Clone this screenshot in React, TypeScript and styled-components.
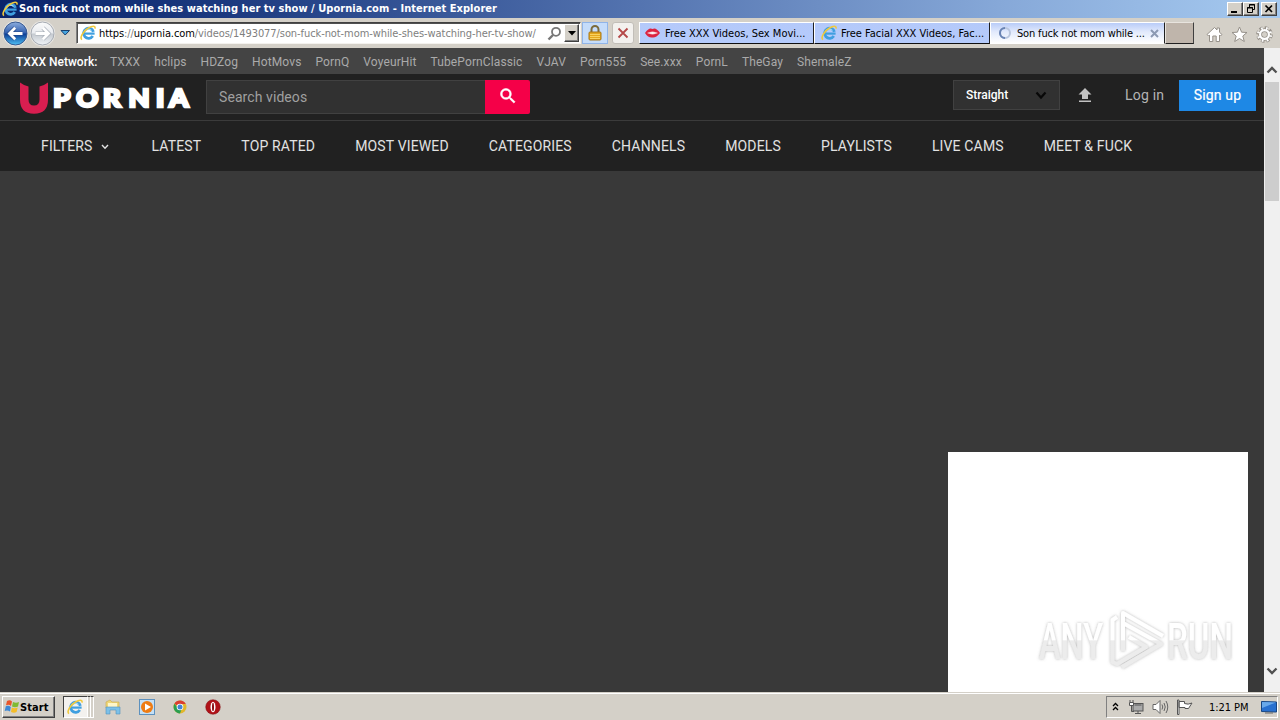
import React from "react";
import styled, { createGlobalStyle } from "styled-components";

const GlobalStyle = createGlobalStyle`
  * { box-sizing: border-box; }
  html, body { margin: 0; padding: 0; overflow: hidden; }
`;

const uiFont = `"DejaVu Sans Condensed", "DejaVu Sans", sans-serif`;

const Desktop = styled.div`
  width: 1280px;
  height: 720px;
  display: flex;
  flex-direction: column;
  overflow: hidden;
  background: #d4d0c8;
  font-family: ${uiFont};
  font-size: 11px;
  color: #000;
  white-space: nowrap;
`;

const TitleBar = styled.header`
  height: 18px;
  flex: none;
  display: flex;
  align-items: center;
  padding: 0 3px 0 2px;
  background: linear-gradient(90deg, #0a246a 0%, #1c3a80 18%, #5474b0 50%, #86a8d8 78%, #a6caf0 100%);
`;

const Title = styled.div`
  flex: 1;
  margin-left: 1px;
  color: #fff;
  font-weight: 700;
  font-size: 11px;
  letter-spacing: 0.04px;
  line-height: 18px;
`;

const WindowButtons = styled.div`
  display: flex;
`;

const WindowButton = styled.button<{ $gap?: number }>`
  width: 16px;
  height: 14px;
  padding: 0;
  margin-left: ${(p) => p.$gap ?? 0}px;
  border: 1px solid;
  border-color: #fff #404040 #404040 #fff;
  box-shadow: inset -1px -1px #808080;
  background: #d4d0c8;
  display: flex;
  align-items: center;
  justify-content: center;
`;

const Toolbar = styled.div`
  height: 30px;
  flex: none;
  display: flex;
  align-items: center;
  padding-left: 2px;
  background: #d4d0c8;
`;

const AddressBar = styled.div`
  width: 505px;
  height: 22px;
  margin-left: 5px;
  display: flex;
  align-items: center;
  padding: 1px 1px 1px 3px;
  border: 1px solid;
  border-color: #404040 #f4f2ee #f4f2ee #808080;
  box-shadow: inset 1px 1px #505050;
  background: #fff;
`;

const Address = styled.div`
  flex: 1;
  margin-left: 3px;
  color: #808080;
  letter-spacing: -0.08px;
  b { font-weight: 400; color: #000; }
`;

const DropButton = styled.button`
  width: 15px;
  height: 18px;
  margin-left: 2px;
  padding: 0;
  border: 1px solid;
  border-color: #fff #404040 #404040 #fff;
  box-shadow: inset -1px -1px #808080;
  background: #d4d0c8;
  display: flex;
  align-items: center;
  justify-content: center;
`;

const ToolButton = styled.button<{ $width: number; $active?: boolean; $gap: number }>`
  width: ${(p) => p.$width}px;
  height: 22px;
  margin-left: ${(p) => p.$gap}px;
  padding: 0;
  display: flex;
  align-items: center;
  justify-content: center;
  border: 1px solid ${(p) => (p.$active ? "#90b4e8" : "#c2beb8")};
  border-radius: ${(p) => (p.$active ? 0 : 3)}px;
  background: ${(p) => (p.$active ? "#c5dcfa" : "#f3f1ee")};
`;

const Tabs = styled.div`
  display: flex;
  margin-left: 5px;
`;

const Tab = styled.div<{ $width: number; $active?: boolean; $pad: number }>`
  width: ${(p) => p.$width}px;
  height: 22px;
  display: flex;
  align-items: center;
  padding-left: ${(p) => p.$pad}px;
  border: 1px solid;
  border-color: #fff #202020 #101010 #fff;
  background: ${(p) =>
    p.$active ? "linear-gradient(#b9ccf8, #e2eafc 45%, #ffffff)" : "linear-gradient(#b4c9fa, #b5cbfc)"};
  ${(p) => p.$active && "border-bottom-color: #fff;"}
`;

const TabLabel = styled.span<{ $gap: number; $spacing: number }>`
  margin-left: ${(p) => p.$gap}px;
  letter-spacing: ${(p) => p.$spacing}px;
`;

const NewTab = styled.div`
  width: 29px;
  height: 22px;
  border: 1px solid;
  border-color: #e8e4de #404040 #202020 #e8e4de;
  background: #bfb5ab;
`;

const ToolIcons = styled.div`
  display: flex;
  gap: 8px;
  margin-left: 12px;
  padding-top: 3px;
`;

const Viewport = styled.main`
  height: 644px;
  flex: none;
  display: flex;
`;

const Page = styled.div`
  width: 1264px;
  display: flex;
  flex-direction: column;
  background: #393939;
  font-family: Roboto, sans-serif;
`;

const Network = styled.nav`
  height: 26px;
  flex: none;
  display: flex;
  align-items: center;
  padding: 2px 0 0 16px;
  background: #444;
  color: #aaa;
  font-size: 12px;
`;

const NetworkLabel = styled.span`
  width: 94px;
  color: #fff;
  font-weight: 500;
`;

const NetworkLink = styled.a`
  margin-right: 14px;
  letter-spacing: 0.115px;
`;

const SiteHeader = styled.header`
  height: 47px;
  flex: none;
  display: flex;
  align-items: flex-start;
  padding: 6px 8px 0 20px;
  background: #212121;
  border-bottom: 1px solid #3b3b3b;
`;

const Brand = styled.div`
  width: 186px;
  display: flex;
  align-items: flex-start;
  padding-top: 2px;
`;

const SearchField = styled.div`
  width: 279px;
  height: 34px;
  padding-left: 12px;
  border: 1px solid #414141;
  border-right: 0;
  background: #313131;
  color: #a0a0a0;
  font-size: 14px;
  letter-spacing: 0.08px;
  line-height: 32px;
`;

const SearchButton = styled.button`
  width: 45px;
  height: 34px;
  padding: 0 0 3px;
  border: 0;
  border-radius: 0 2px 2px 0;
  background: #f50048;
  display: flex;
  align-items: center;
  justify-content: center;
`;

const Account = styled.div`
  flex: 1;
  display: flex;
  align-items: flex-start;
  justify-content: flex-end;
`;

const Orientation = styled.div`
  width: 107px;
  height: 30px;
  display: flex;
  align-items: center;
  justify-content: space-between;
  padding: 0 12px;
  border: 1px solid #414141;
  background: #313131;
  color: #fff;
  font-size: 12px;
  font-weight: 500;
`;

const Upload = styled.div`
  width: 65px;
  height: 30px;
  padding: 7px 0 0 18px;
`;

const LogIn = styled.a`
  width: 54px;
  color: #b4b4b4;
  font-size: 14px;
  line-height: 30px;
  letter-spacing: 0.2px;
`;

const SignUp = styled.a`
  width: 77px;
  height: 31px;
  background: #1e88e5;
  color: #fff;
  font-size: 14px;
  font-weight: 400;
  letter-spacing: 0.15px;
  -webkit-text-stroke: 0.2px #fff;
  line-height: 31px;
  text-align: center;
`;

const Menu = styled.nav`
  height: 50px;
  flex: none;
  display: flex;
  align-items: center;
  gap: 40px;
  padding-left: 41px;
  background: #212121;
  color: #e2e2e2;
  font-size: 14px;
  letter-spacing: 0.15px;
`;

const MenuItem = styled.a`
  display: flex;
  align-items: center;
`;

const Content = styled.section`
  flex: 1;
  display: flex;
  align-items: flex-end;
  justify-content: flex-end;
  padding-right: 16px;
`;

const Advert = styled.div`
  width: 300px;
  height: 240px;
  display: flex;
  align-items: flex-start;
  justify-content: flex-end;
  padding: 152px 8px 0 0;
  background: #fff;
`;

const ScrollBar = styled.div`
  width: 16px;
  display: flex;
  flex-direction: column;
  align-items: center;
  background: #f0f0f0;
`;

const ScrollArrow = styled.div<{ $height: number; $lift: number }>`
  height: ${(p) => p.$height}px;
  display: flex;
  align-items: flex-end;
  padding-bottom: ${(p) => p.$lift}px;
`;

const ScrollThumb = styled.div`
  width: 14px;
  height: 119px;
  background: #cdcdcd;
`;

const ScrollTrack = styled.div`
  flex: 1;
`;

const Taskbar = styled.footer`
  height: 28px;
  flex: none;
  display: flex;
  align-items: flex-start;
  padding: 3px 2px 0 2px;
  border-top: 1px solid #d4d0c8;
  box-shadow: inset 0 1px #fff;
  background: #d4d0c8;
`;

const StartButton = styled.button`
  width: 53px;
  height: 22px;
  padding: 0 0 0 1px;
  display: flex;
  align-items: center;
  border: 1px solid;
  border-color: #fff #404040 #404040 #fff;
  box-shadow: inset -1px -1px #808080;
  background: #d4d0c8;
  font: 700 11px ${uiFont};
  letter-spacing: 0.1px;
`;

const ActiveTask = styled.div`
  width: 25px;
  height: 22px;
  margin-left: 8px;
  padding-left: 3px;
  display: flex;
  align-items: center;
  border: 1px solid;
  border-color: #404040 #fff #fff #404040;
  background: #f3f1ee;
`;

const StackEdge = styled.div`
  width: 3px;
  height: 22px;
  border: 1px solid #fff;
  border-left: 0;
  border-top-color: #404040;
`;

const QuickLaunch = styled.div`
  display: flex;
  gap: 18px;
  margin-left: 11px;
  padding-top: 3px;
`;

const Tray = styled.div`
  width: 172px;
  height: 22px;
  margin-left: auto;
  display: flex;
  align-items: center;
  padding-left: 5px;
  border: 1px solid;
  border-color: #808080 #fff #fff #808080;
`;

const Clock = styled.span`
  width: 41px;
  margin: 0 11px 0 16px;
  letter-spacing: -0.05px;
`;

function IELogo({ size = 16 }: { size?: number }) {
  return (
    <svg width={size} height={size} viewBox="0 0 16 16" fill="none">
      <path d="M13.4 6.9A5 5 0 1 0 12.8 11" stroke="#3f9fe0" strokeWidth="2.8" />
      <path d="M4 8.6H14.6" stroke="#3f9fe0" strokeWidth="2.2" />
      <path d="M4.6 6.5A4.2 4.2 0 0 1 11.5 5.5" stroke="#a5dcfa" strokeWidth="1.1" />
      <path d="M2 14.6C-.6 13 3 6 8.5 3C12 .8 15.5.2 15 3.6" stroke="#f0c93c" strokeWidth="1.6" />
    </svg>
  );
}

function NavCircle({ forward }: { forward?: boolean }) {
  const id = forward ? "fwd" : "back";
  return (
    <svg width="27" height="27" viewBox="0 0 27 27">
      <defs>
        <linearGradient id={id} x1="0" y1="0" x2="0" y2="1">
          <stop offset="0" stopColor={forward ? "#fbfbfb" : "#8eaede"} />
          <stop offset=".48" stopColor={forward ? "#e8ebef" : "#315fae"} />
          <stop offset=".52" stopColor={forward ? "#c4c9cf" : "#0b3d95"} />
          <stop offset="1" stopColor={forward ? "#f0f4f8" : "#4fc1f5"} />
        </linearGradient>
      </defs>
      <circle cx="13.5" cy="13.5" r="12.7" fill="#e8e6e2" />
      <circle cx="13.5" cy="13.5" r="11.5" fill={`url(#${id})`} stroke={forward ? "#a5aab2" : "#37588f"} />
      <g transform={forward ? "translate(27 0) scale(-1 1)" : undefined}>
        <path
          d="M20.5 13.5H8M13 8L7.5 13.5L13 19"
          fill="none"
          stroke={forward ? "#a6adb6" : "#24488a"}
          strokeWidth="4.2"
        />
        <path d="M20.5 13.5H8M13.2 7.8L7.5 13.5L13.2 19.2" fill="none" stroke="#fff" strokeWidth="2.8" />
      </g>
    </svg>
  );
}

function Watermark() {
  return (
    <svg width="204" height="76" viewBox="0 0 204 76" fill="none" overflow="visible">
      <defs>
        <linearGradient id="mark" x1="0" y1="0" x2="0" y2="66" gradientUnits="userSpaceOnUse">
          <stop offset=".54" stopColor="#fff" />
          <stop offset=".56" stopColor="#ececec" />
        </linearGradient>
        <filter id="halo" x="-10%" y="-10%" width="120%" height="120%">
          <feDropShadow dx="0" dy="0" stdDeviation="1.6" floodColor="#777" floodOpacity=".55" />
        </filter>
      </defs>
      <g filter="url(#halo)" fill="url(#mark)">
        <text x="3" y="55" fontFamily="Roboto" fontSize="50" fontWeight="500" textLength="64" lengthAdjust="spacingAndGlyphs">ANY</text>
        <text x="131" y="55" fontFamily="Roboto" fontSize="50" fontWeight="500" textLength="66" lengthAdjust="spacingAndGlyphs">RUN</text>
        <g stroke="url(#mark)" strokeWidth="4" strokeLinejoin="round" fill="none">
          <path d="M81 13L76.5 16V58L81 60L110 43L93 33" />
          <path d="M87 47V9L127 32" />
          <path d="M87 19L125 40L86 63" />
        </g>
      </g>
    </svg>
  );
}

const network = ["TXXX", "hclips", "HDZog", "HotMovs", "PornQ", "VoyeurHit", "TubePornClassic", "VJAV", "Porn555", "See.xxx", "PornL", "TheGay", "ShemaleZ"];
const menu = ["LATEST", "TOP RATED", "MOST VIEWED", "CATEGORIES", "CHANNELS", "MODELS", "PLAYLISTS", "LIVE CAMS", "MEET & FUCK"];

export default function App() {
  return (
    <Desktop>
      <GlobalStyle />
      <TitleBar>
        <IELogo />
        <Title>Son fuck not mom while shes watching her tv show / Upornia.com - Internet Explorer</Title>
        <WindowButtons>
          <WindowButton>
            <svg width="12" height="10"><path d="M2 8H8" stroke="#000" strokeWidth="2" /></svg>
          </WindowButton>
          <WindowButton>
            <svg width="10" height="10" fill="none" stroke="#000"><path d="M3.5 3V.5H8.5V5.5H7M3 1H9M1.5 3.5H6.5V8.5H1.5ZM1 4H7" /></svg>
          </WindowButton>
          <WindowButton $gap={2}>
            <svg width="10" height="10"><path d="M1.5 1.5L8 8M8 1.5L1.5 8" stroke="#000" strokeWidth="1.7" /></svg>
          </WindowButton>
        </WindowButtons>
      </TitleBar>

      <Toolbar>
        <NavCircle />
        <NavCircle forward />
        <svg width="11" height="8" style={{ marginLeft: 4 }}><path d="M1 1.5H9.5L5.2 6Z" fill="#46a5e0" stroke="#17406f" /></svg>
        <AddressBar>
          <IELogo />
          <Address><b>https</b>://<b>upornia.com</b>/videos/1493077/son-fuck-not-mom-while-shes-watching-her-tv-show/</Address>
          <svg width="15" height="15" fill="none" stroke="#777"><circle cx="9" cy="5.8" r="4" strokeWidth="1.8" /><path d="M6 9L1.5 13.5" strokeWidth="2.4" /></svg>
          <DropButton><svg width="8" height="5"><path d="M0 0H8L4 4.5Z" /></svg></DropButton>
        </AddressBar>
        <ToolButton $width={26} $gap={1} $active>
          <svg width="16" height="18" fill="none">
            <path d="M4.5 9V5.5A3.5 3.5 0 0 1 11.5 5.5V9" stroke="#7c6c3c" strokeWidth="2" />
            <rect x="2" y="8" width="12" height="8" rx="1" fill="#e5a81d" stroke="#a87616" />
            <path d="M3 10.5H13M3 12.5H13M3 14.5H13" stroke="#f8d260" />
          </svg>
        </ToolButton>
        <ToolButton $width={22} $gap={4}>
          <svg width="12" height="12"><path d="M1.5 1.5L10.5 10.5M10.5 1.5L1.5 10.5" stroke="#b54848" strokeWidth="1.8" /></svg>
        </ToolButton>
        <Tabs>
          <Tab $width={175} $pad={5}>
            <svg width="15" height="10"><path d="M0 5Q4-1 7.5 1Q11-1 15 5Q11 10 7.5 9.5Q3 10 0 5Z" fill="#dc2340" /><path d="M2.5 5Q7.5 2.5 12.5 5Q7.5 7.5 2.5 5Z" fill="#fff" stroke="#ee99a7" strokeWidth=".5" /></svg>
            <TabLabel $gap={5} $spacing={0}>Free XXX Videos, Sex Movi...</TabLabel>
          </Tab>
          <Tab $width={176} $pad={6}>
            <IELogo />
            <TabLabel $gap={4} $spacing={0}>Free Facial XXX Videos, Fac...</TabLabel>
          </Tab>
          <Tab $width={175} $pad={7} $active>
            <svg width="14" height="14" fill="none"><circle cx="7" cy="7" r="5" stroke="#b9c6de" strokeWidth="2" /><path d="M7 2A5 5 0 0 0 2 7A5 5 0 0 0 7 12" stroke="#6983b4" strokeWidth="2" /></svg>
            <TabLabel $gap={5} $spacing={-0.17}>Son fuck not mom while ...</TabLabel>
            <svg width="9" height="9" style={{ marginLeft: 5 }}><path d="M1 1L8 8M8 1L1 8" stroke="#8c99b2" strokeWidth="2" /></svg>
          </Tab>
          <NewTab />
        </Tabs>
        <ToolIcons>
          <svg width="17" height="17" fill="#fff" stroke="#96918a"><path d="M1 8.5L8.5 1.5L11 4V2H13.5V6.3L16 8.5L14.5 10L13.5 9V15.5H10.2V10H6.8V15.5H3.5V9L2.5 10Z" /></svg>
          <svg width="17" height="17" fill="#fff" stroke="#96918a"><path d="M8.5 1L10.6 6.2L16 6.5L11.8 10L13.3 15.5L8.5 12.5L3.7 15.5L5.2 10L1 6.5L6.4 6.2Z" /></svg>
          <svg width="17" height="17" fill="none">
            <circle cx="8.5" cy="8.5" r="6.6" stroke="#96918a" strokeWidth="3.4" strokeDasharray="3.2 1.98" />
            <circle cx="8.5" cy="8.5" r="4.4" stroke="#96918a" strokeWidth="3.8" />
            <circle cx="8.5" cy="8.5" r="6.3" stroke="#fff" strokeWidth="2.6" strokeDasharray="1.6 3.35" strokeDashoffset="-.8" />
            <circle cx="8.5" cy="8.5" r="4.4" stroke="#fff" strokeWidth="2.2" />
          </svg>
        </ToolIcons>
      </Toolbar>

      <Viewport>
        <Page>
          <Network>
            <NetworkLabel>TXXX Network:</NetworkLabel>
            {network.map((name) => <NetworkLink key={name}>{name}</NetworkLink>)}
          </Network>
          <SiteHeader>
            <Brand>
              <svg width="176" height="32">
                <path d="M0 .5Q3 3 8.5 4.5V17.5Q8.5 23.5 14 23.5Q19.5 23.5 19.5 17.5V4.5Q25 3 28 .5V17.5Q28 31.7 14 31.7Q0 31.7 0 17.5Z" fill="#d81e50" />
                <g transform="translate(34 24.5) scale(1.14 1)">
                  <text
                    x="-0.6 19.5 43 65.4 89.5 101.2"
                    y="0"
                    fontFamily="Lato"
                    fontSize="24"
                    fontWeight="900"
                    fill="#fff"
                    stroke="#fff"
                    strokeWidth="2.5"
                  >
                    PORNIA
                  </text>
                </g>
              </svg>
            </Brand>
            <SearchField>Search videos</SearchField>
            <SearchButton>
              <svg width="20" height="20" viewBox="0 0 24 24" fill="#fff"><path d="M15.5 14h-.79l-.28-.27A6.47 6.47 0 0 0 16 9.5 6.5 6.5 0 1 0 9.5 16c1.61 0 3.09-.59 4.23-1.57l.27.28v.79l5 4.99L20.49 19l-4.99-5zm-6 0C7.01 14 5 11.99 5 9.5S7.01 5 9.5 5 14 7.01 14 9.5 11.99 14 9.5 14z" stroke="#fff" strokeWidth=".7" /></svg>
            </SearchButton>
            <Account>
              <Orientation>
                Straight
                <svg width="12" height="9" fill="none"><path d="M1.5 1.5L6 6.5L10.5 1.5" stroke="#080808" strokeWidth="2.2" /></svg>
              </Orientation>
              <Upload><svg width="14" height="16" fill="#c2c2c2"><path d="M7 1L13.5 7.5H10V12H4V7.5H.5ZM1 13.5H13V15H1Z" /></svg></Upload>
              <LogIn>Log in</LogIn>
              <SignUp>Sign up</SignUp>
            </Account>
          </SiteHeader>
          <Menu>
            <MenuItem>
              FILTERS
              <svg width="8" height="6" fill="none" style={{ margin: "2px 3px 0 8px" }}><path d="M1 1L4 4.3L7 1" stroke="#e2e2e2" strokeWidth="1.4" /></svg>
            </MenuItem>
            {menu.map((name) => <MenuItem key={name}>{name}</MenuItem>)}
          </Menu>
          <Content>
            <Advert><Watermark /></Advert>
          </Content>
        </Page>
        <ScrollBar>
          <ScrollArrow $height={34} $lift={8}><svg width="12" height="8" fill="none"><path d="M1.5 6.5L6 2L10.5 6.5" stroke="#505050" strokeWidth="2.3" /></svg></ScrollArrow>
          <ScrollThumb />
          <ScrollTrack />
          <ScrollArrow $height={25} $lift={17}><svg width="12" height="8" fill="none"><path d="M1.5 1.5L6 6L10.5 1.5" stroke="#505050" strokeWidth="2.3" /></svg></ScrollArrow>
        </ScrollBar>
      </Viewport>

      <Taskbar>
        <StartButton>
          <svg width="16" height="16">
            <path d="M3 2Q6 .5 8 2.5L7 7Q5 5 2 6.3Z" fill="#e8552b" />
            <path d="M9 3Q12 4.5 15 3L14 7.5Q11 9 8 7.5Z" fill="#7fba31" />
            <path d="M1.8 7.3Q4.5 6 6.8 8L6 12.5Q3.5 10.8.7 12Z" fill="#3d88d6" />
            <path d="M7.8 8.5Q10.5 10 13.7 8.5L12.6 13Q10 14.5 7 13Z" fill="#f5bd28" />
          </svg>
          Start
        </StartButton>
        <ActiveTask><IELogo /></ActiveTask>
        <StackEdge />
        <StackEdge />
        <QuickLaunch>
          <svg width="16" height="17"><path d="M1 3L5 1L7 3H14V9H1Z" fill="#eed678" stroke="#c9a84c" strokeWidth=".6" /><path d="M3 4H12V8H3Z" fill="#fff6c9" /><path d="M1 8H15V15H11V11H5V15H1Z" fill="#7cc0e8" stroke="#5090bd" strokeWidth=".6" /></svg>
          <svg width="16" height="17"><rect x=".5" y=".5" width="15" height="15" fill="#c4e0f6" stroke="#5d91be" /><circle cx="8" cy="8" r="6" fill="#ee7c14" /><path d="M6 4.5L12 8L6 11.5Z" fill="#fff" /></svg>
          <svg width="14" height="16"><circle cx="7" cy="8" r="6.5" fill="#e2b72a" /><path d="M7 8L1.4 4.8A6.5 6.5 0 0 1 12.8 5H7Z" fill="#d93e31" /><path d="M1.4 4.8A6.5 6.5 0 0 0 7 14.5L9 9L5 9Z" fill="#2b9e50" /><circle cx="7" cy="8" r="3.3" fill="#fff" /><circle cx="7" cy="8" r="2.5" fill="#4285d4" /></svg>
          <svg width="16" height="16"><circle cx="8" cy="8" r="7.3" fill="#b01218" stroke="#801015" strokeWidth=".5" /><ellipse cx="8" cy="8" rx="2.5" ry="5.3" fill="#fff" /><ellipse cx="8" cy="8" rx="1" ry="4.3" fill="#8c0c12" /></svg>
        </QuickLaunch>
        <Tray>
          <svg width="7" height="10" fill="none" stroke="#000" strokeWidth="1.3"><path d="M1 4L3.5 1.5L6 4M1 8L3.5 5.5L6 8" /></svg>
          <svg width="16" height="16" fill="none" stroke="#555" style={{ marginLeft: 9 }}><rect x="5" y="4.5" width="10" height="7.5" fill="#aaa" /><path d="M6.5 6H13.5M7 14.5H13M10 12V14M3.5 7V12.5H6" /><path d="M1.5 3.5H5.5V6.5H1.5ZM2 1V3M5 1V3" fill="#fff" /></svg>
          <svg width="17" height="16" fill="none" stroke="#666" style={{ marginLeft: 8 }}><path d="M1 5.5H4L8 1.5V14.5L4 10.5H1Z" fill="#fff" /><path d="M10 5.5Q11.5 8 10 10.5M12 4Q14.5 8 12 12M14 2Q17.5 8 14 14" /></svg>
          <svg width="17" height="16" fill="#fff" stroke="#555" style={{ marginLeft: 7 }}><path d="M1.5 1V15.5H3V1ZM3 2.5H8.5V4.5Q12 6 16 4L12.5 9.5H9V8.5H3Z" /></svg>
          <Clock>1:21 PM</Clock>
          <svg width="16" height="14"><path d="M.5 1.5L15.5 2V12L.5 11.5Z" fill="#2870cf" stroke="#174682" /><path d="M1 2L15 2.5L1 8Z" fill="#69a9ea" /><path d="M4 13H12" stroke="#666" /></svg>
        </Tray>
      </Taskbar>
    </Desktop>
  );
}
